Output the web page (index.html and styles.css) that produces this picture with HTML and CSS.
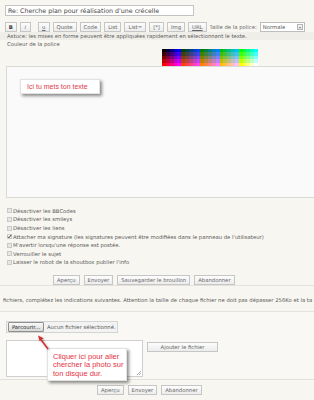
FILE: index.html
```html
<!DOCTYPE html>
<html>

<head>
	<meta charset="UTF-8">
	<title>Répondre</title>
	<link rel="stylesheet" href="styles.css">
</head>

<body>
	<div class="page">
		<div class="subject">Re: Cherche plan pour réalisation d'une crécelle</div>

		<div class="toolbar">
			<span class="btn btn-small btn-bold">B</span>
			<span class="btn btn-small btn-italic">i</span>
			<span class="btn btn-small btn-under">u</span>
			<span class="btn">Quote</span>
			<span class="btn">Code</span>
			<span class="btn">List</span>
			<span class="btn">List=</span>
			<span class="btn">[*]</span>
			<span class="btn">Img</span>
			<span class="btn btn-under">URL</span>
			<span class="size-label">Taille de la police:</span>
			<span class="select">Normale<i class="select-arrow"></i></span>
		</div>

		<div class="hint">Astuce: les mises en forme peuvent être appliquées rapidement en sélectionnant le texte.</div>
		<div class="colour-label">Couleur de la police</div>
		<div class="palette" id="palette"></div>

		<div class="editor"></div>

		<ul class="options">
			<li><span class="box"></span>Désactiver les BBCodes</li>
			<li><span class="box"></span>Désactiver les smileys</li>
			<li><span class="box"></span>Désactiver les liens</li>
			<li><span class="box box-checked"><svg viewBox="0 0 5 5" width="5" height="5"><path d="M1 2.6 L2 3.8 L4.2 0.9" fill="none" stroke="#333" stroke-width="0.9"/></svg></span>Attacher ma signature (les signatures peuvent être modifiées dans le panneau de l'utilisateur)</li>
			<li><span class="box"></span>M'avertir lorsqu'une réponse est postée.</li>
			<li><span class="box"></span>Verrouiller le sujet</li>
			<li><span class="box"></span>Laisser le robot de la shoutbox publier l'info</li>
		</ul>

		<div class="actions">
			<span class="btn">Aperçu</span>
			<span class="btn">Envoyer</span>
			<span class="btn">Sauvegarder le brouillon</span>
			<span class="btn">Abandonner</span>
		</div>

		<div class="attach-note">fichiers, complétez les indications suivantes. Attention la taille de chaque fichier ne doit pas dépasser 256Ko et la ta</div>

		<div class="attach">
			<div class="file-row">
				<span class="browse">Parcourir...</span>
				<span class="file-none">Aucun fichier sélectionné.</span>
			</div>
			<div class="comment-row">
				<div class="comment"><i class="grip"></i></div>
				<span class="btn btn-add">Ajouter le fichier</span>
			</div>
		</div>

		<div class="actions actions-bottom">
			<span class="btn">Aperçu</span>
			<span class="btn">Envoyer</span>
			<span class="btn">Abandonner</span>
		</div>

		<!-- bulles d'aide par-dessus le formulaire -->
		<div class="callout callout-text">Ici tu mets ton texte</div>
		<div class="callout callout-file">Cliquer ici pour aller<br>chercher la photo sur<br>ton disque dur.</div>
		<svg class="arrow" width="20" height="20" viewBox="0 0 20 20">
			<path d="M12 15 L4.5 5" stroke="#d42a2a" stroke-width="1.4" fill="none"/>
			<path d="M2 1.5 L7.5 4.2 L3.6 7 Z" fill="#d42a2a"/>
		</svg>
	</div>

	<script>
		//palette : r par ligne, g puis b en colonnes
		let levels = ['00', '40', '80', 'BF', 'FF'];
		let palette = document.getElementById('palette');
		levels.forEach(r => {
			levels.forEach(g => {
				levels.forEach(b => {
					let cell = document.createElement('span');
					cell.style.background = '#' + r + g + b;
					palette.appendChild(cell);
				});
			});
		});
	</script>
</body>

</html>
```

FILE: styles.css
```css
html,
body {
	margin: 0;
	width: 314px;
	height: 400px;
	overflow: hidden;
}

body {
	background: #f7f6f1;
	color: #5a5a5a;
	font: 5.3px/1.2 "DejaVu Sans", Verdana, sans-serif;
}

ul,
li {
	margin: 0;
	padding: 0;
	list-style: none;
}

.page {
	position: relative;
	height: 400px;
}

.subject {
	margin: 5px 0 0 5px;
	width: 189px;
	height: 11px;
	box-sizing: border-box;
	border: 1px solid #c3c3c3;
	background: #fff;
	padding-left: 2px;
	font-size: 6.3px;
	line-height: 9px;
	color: #444;
}

.toolbar {
	display: flex;
	align-items: center;
	gap: 3px;
	margin: 6px 0 0 5px;
	height: 10px;
}

.btn {
	box-sizing: border-box;
	height: 10px;
	padding: 0 3px;
	border: 1px solid #c6c6c6;
	background: linear-gradient(#fdfdfd, #ececec);
	line-height: 8px;
	color: #666;
	white-space: nowrap;
	text-align: center;
}

.btn-small {
	width: 11.5px;
	padding: 0;
}

.btn-bold {
	font-weight: bold;
	color: #333;
}

.btn-italic {
	font-style: italic;
}

.btn-under {
	text-decoration: underline;
}

.btn-italic + .btn-under {
	margin-left: 4px;
}

.size-label {
	color: #666;
}

.select {
	position: relative;
	box-sizing: border-box;
	width: 45px;
	height: 10px;
	border: 1px solid #bdbdbd;
	background: #fff;
	padding-left: 2px;
	line-height: 8px;
	color: #555;
}

.select-arrow {
	position: absolute;
	right: 1px;
	top: 1px;
	width: 6px;
	height: 6px;
	box-sizing: border-box;
	border: 1px solid #b5b5b5;
	background: linear-gradient(#f8f8f8, #dcdcdc);
}

.select-arrow::after {
	content: "";
	position: absolute;
	left: 1px;
	top: 1.5px;
	border-left: 1px solid transparent;
	border-right: 1px solid transparent;
	border-top: 1.2px solid #444;
}

.hint {
	height: 8px;
	line-height: 8px;
	padding-left: 7px;
	background: #efeee9;
	white-space: nowrap;
}

.colour-label {
	height: 9px;
	line-height: 9px;
	padding-left: 7px;
}

.palette {
	display: grid;
	grid-template-columns: repeat(25, 1fr);
	grid-template-rows: repeat(5, 1fr);
	width: 96px;
	height: 17px;
	margin-left: 162px;
}

.editor {
	height: 132px;
	margin-left: 6px;
	width: 400px;
	box-sizing: border-box;
	border: 1px solid #d9d9d6;
	background: #fafafa;
}

.options {
	padding-top: 8.7px;
}

.options li {
	display: flex;
	align-items: center;
	height: 8.6px;
	padding-left: 7px;
	white-space: nowrap;
}

.box {
	display: flex;
	width: 5px;
	height: 5px;
	box-sizing: border-box;
	margin-right: 1px;
	border: 1px solid #c9c9c9;
	background: #e6e6e4;
}

.box svg {
	margin: -1px;
}

.box-checked {
	background: #f2f2f2;
}

.actions {
	display: flex;
	gap: 4px;
	margin-top: 8px;
	padding-left: 53px;
	height: 10px;
	border-bottom: 1px solid #e3e1da;
}

.attach-note {
	height: 26px;
	box-sizing: border-box;
	padding: 11px 0 0 3px;
	line-height: 7px;
	white-space: nowrap;
	overflow: hidden;
	border-bottom: 1px solid #e6e4dd;
}

.attach {
	padding: 9px 0 2px 6px;
	border-bottom: 1px solid #e3e1da;
	background: #f9f8f5;
}

.file-row {
	display: flex;
	align-items: center;
	gap: 3px;
	width: 112px;
	height: 12px;
	box-sizing: border-box;
	padding-left: 1px;
	border: 1px solid #d4d4d4;
	background: #f3f3f3;
}

.browse {
	box-sizing: border-box;
	width: 36px;
	height: 10px;
	border: 1px solid #8f8f8f;
	border-radius: 1px;
	background: linear-gradient(#fafafa, #d8d8d8);
	line-height: 8px;
	text-align: center;
	color: #222;
}

.file-none {
	color: #555;
}

.comment-row {
	display: flex;
	align-items: flex-start;
	gap: 4px;
	margin-top: 7px;
}

.comment {
	position: relative;
	width: 137px;
	height: 37px;
	box-sizing: border-box;
	border: 1px solid #cfcfcf;
	background: #fff;
}

.grip {
	position: absolute;
	right: 1px;
	bottom: 1px;
	width: 4px;
	height: 4px;
	background: linear-gradient(135deg, transparent 45%, #b0b0b0 45%, #b0b0b0 55%, transparent 55%, transparent 70%, #b0b0b0 70%, #b0b0b0 80%, transparent 80%);
}

.btn-add {
	width: 71px;
	margin-top: 2px;
}

.actions-bottom {
	margin-top: 5px;
	padding-left: 97px;
	border-bottom: 0;
}

.callout {
	position: absolute;
	box-sizing: border-box;
	background: #fff;
	border: 1px solid #e2e2e2;
	box-shadow: 2px 2px 3px rgba(0, 0, 0, 0.45);
	font-family: "Liberation Sans", Arial, sans-serif;
	color: #dd3b4c;
}

.callout-text {
	left: 20px;
	top: 74px;
	width: 80px;
	height: 15px;
	padding-left: 6px;
	font-size: 7px;
	line-height: 13px;
}

.callout-file {
	left: 47px;
	top: 343px;
	width: 80px;
	height: 33px;
	padding: 3.5px 0 0 5px;
	font-size: 7.5px;
	line-height: 8.5px;
	color: #e5323f;
}

.arrow {
	position: absolute;
	left: 36px;
	top: 329px;
	filter: drop-shadow(1px 1px 1px rgba(0, 0, 0, 0.35));
}
```
